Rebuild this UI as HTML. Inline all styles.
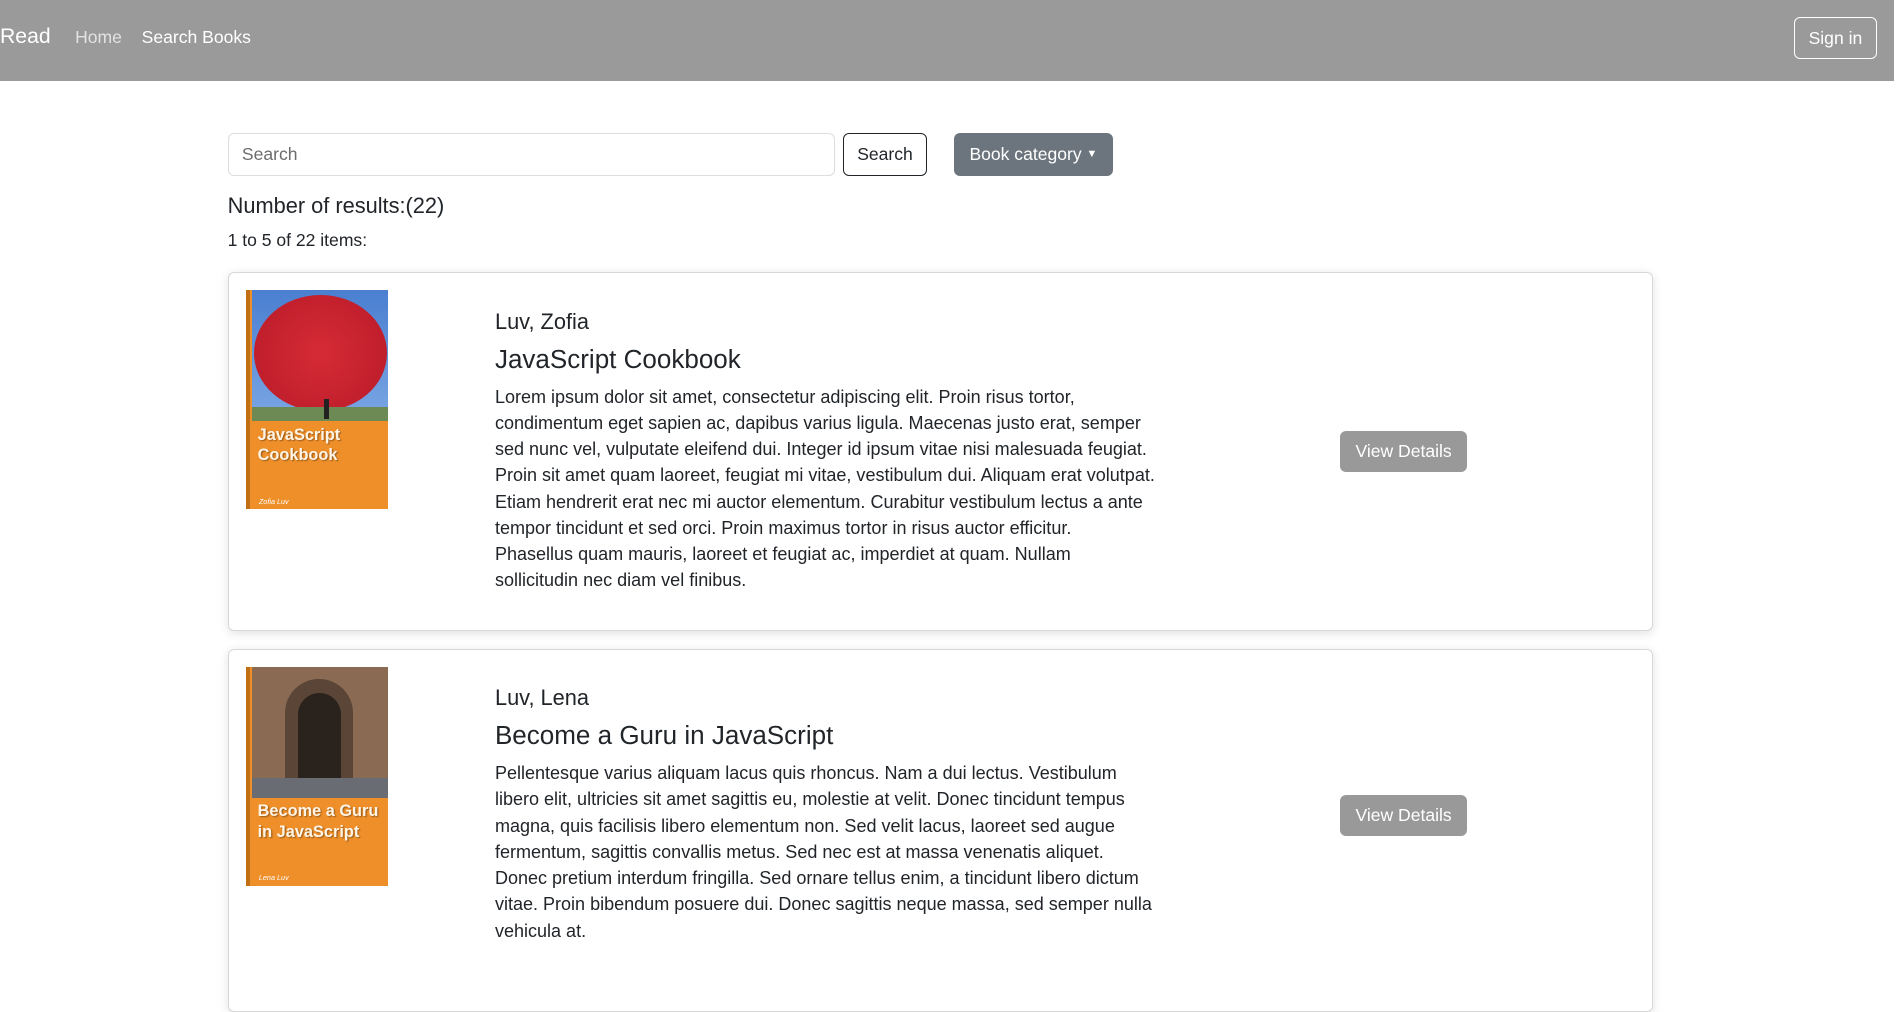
<!DOCTYPE html>
<html><head><meta charset="utf-8"><style>
html{zoom:1.2107}
body{margin:0;width:1566px;height:806px;overflow:hidden;font-family:"Liberation Sans",sans-serif;color:#212529;background:#fff;position:relative}
.nav{position:absolute;left:0;top:0;width:1564px;height:67px;background:#9a9a9a}
.a{position:absolute;white-space:nowrap}
.btn{position:absolute;box-sizing:border-box;border-radius:5px;font-size:14.5px;display:flex;align-items:center;justify-content:center}
.card{position:absolute;left:188px;width:1177px;box-sizing:border-box;border:1px solid #d8d8d8;border-radius:5px;box-shadow:0 2px 8px rgba(0,0,0,.12);background:#fff}
.cover{position:absolute;left:14px;top:14px;width:118px;height:181px;overflow:hidden;background:#ee8f2a}
.cover .strip{position:absolute;left:0;top:0;width:4px;height:100%;background:#c06f14}
.cover .img{position:absolute;left:5px;top:0;right:0;height:108px}
.cover .t{position:absolute;left:10px;top:111px;color:#fff5e6;font-weight:bold;font-size:13.5px;line-height:17px;text-shadow:1px 1px 1px rgba(0,0,0,.35)}
.cover .au{position:absolute;left:11px;bottom:3px;color:#fff;font-style:italic;font-size:6px}
.author{position:absolute;left:220px;font-size:18px}
.title{position:absolute;left:220px;font-size:21.5px}
.p{position:absolute;left:220px;width:546px;font-size:14.9px;line-height:21.7px}
.vd{left:918px;width:105px;height:34px;background:#999;color:#fff;font-size:14.5px}
</style></head><body>
<div class="nav">
<div class="a" style="left:0;top:21px;font-size:17.5px;color:#fff">Read</div>
<div class="a" style="left:62px;top:22px;font-size:14.5px;color:#e2e2e2">Home</div>
<div class="a" style="left:117px;top:22px;font-size:14.5px;color:#fff">Search Books</div>
<div class="btn" style="left:1482px;top:14px;width:68px;height:35px;border:1px solid #fff;color:#fff">Sign in</div>
</div>
<div class="btn" style="left:188px;top:110px;width:502px;height:35px;border:1px solid #ddd;justify-content:flex-start;padding-left:11px;color:#6c6c6c">Search</div>
<div class="btn" style="left:696px;top:110px;width:70px;height:35px;border:1px solid #212529;color:#212529">Search</div>
<div class="btn" style="left:788px;top:110px;width:131px;height:35px;background:#6c757d;color:#fff">Book category<span style="font-size:9px;margin-left:4px">▼</span></div>
<div class="a" style="left:188px;top:159px;font-size:18px">Number of results:(22)</div>
<div class="a" style="left:188px;top:190px;font-size:14.5px">1 to 5 of 22 items:</div>

<div class="card" style="top:225px;height:296px">
<div class="cover"><div class="strip"></div>
<div class="img" style="background:linear-gradient(#4a7fd0,#7aa6e4)">
<div style="position:absolute;left:2px;top:4px;width:110px;height:96px;border-radius:50%;background:radial-gradient(circle,#d62b36,#b81a28)"></div>
<div style="position:absolute;left:0;top:96px;right:0;height:12px;background:#6d8a55"></div>
<div style="position:absolute;left:60px;top:90px;width:4px;height:16px;background:#222"></div>
</div>
<div class="t">JavaScript<br>Cookbook</div><div class="au">Zofia Luv</div></div>
<div class="author" style="top:29px">Luv, Zofia</div>
<div class="title" style="top:58px">JavaScript Cookbook</div>
<div class="p" style="top:91px;white-space:nowrap">Lorem ipsum dolor sit amet, consectetur adipiscing elit. Proin risus tortor,<br>condimentum eget sapien ac, dapibus varius ligula. Maecenas justo erat, semper<br>sed nunc vel, vulputate eleifend dui. Integer id ipsum vitae nisi malesuada feugiat.<br>Proin sit amet quam laoreet, feugiat mi vitae, vestibulum dui. Aliquam erat volutpat.<br>Etiam hendrerit erat nec mi auctor elementum. Curabitur vestibulum lectus a ante<br>tempor tincidunt et sed orci. Proin maximus tortor in risus auctor efficitur.<br>Phasellus quam mauris, laoreet et feugiat ac, imperdiet at quam. Nullam<br>sollicitudin nec diam vel finibus.</div>
<div class="btn vd" style="top:130px">View Details</div>
</div>

<div class="card" style="top:536px;height:300px">
<div class="cover"><div class="strip"></div>
<div class="img" style="background:#8a6a52">
<div style="position:absolute;left:28px;top:10px;width:56px;height:98px;border-radius:28px 28px 0 0;background:#5a4536"></div>
<div style="position:absolute;left:38px;top:22px;width:36px;height:86px;border-radius:18px 18px 0 0;background:#2a221c"></div>
<div style="position:absolute;left:0;top:92px;right:0;height:16px;background:#6a6c74"></div>
</div>
<div class="t">Become a Guru<br>in JavaScript</div><div class="au">Lena Luv</div></div>
<div class="author" style="top:29px">Luv, Lena</div>
<div class="title" style="top:58px">Become a Guru in JavaScript</div>
<div class="p" style="top:91px;white-space:nowrap">Pellentesque varius aliquam lacus quis rhoncus. Nam a dui lectus. Vestibulum<br>libero elit, ultricies sit amet sagittis eu, molestie at velit. Donec tincidunt tempus<br>magna, quis facilisis libero elementum non. Sed velit lacus, laoreet sed augue<br>fermentum, sagittis convallis metus. Sed nec est at massa venenatis aliquet.<br>Donec pretium interdum fringilla. Sed ornare tellus enim, a tincidunt libero dictum<br>vitae. Proin bibendum posuere dui. Donec sagittis neque massa, sed semper nulla<br>vehicula at.</div>
<div class="btn vd" style="top:120px">View Details</div>
</div>
</body></html>
